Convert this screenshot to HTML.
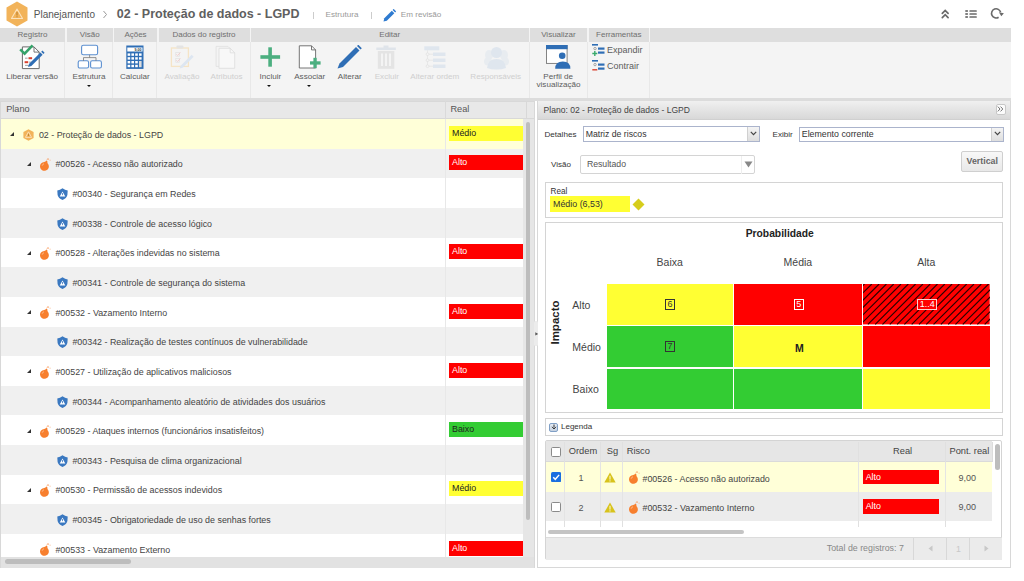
<!DOCTYPE html>
<html><head><meta charset="utf-8">
<style>
*{box-sizing:border-box;margin:0;padding:0}
html,body{width:1024px;height:581px;overflow:hidden;background:#fff;font-family:"Liberation Sans",sans-serif;color:#333}
.a{position:absolute}
.t{position:absolute;white-space:nowrap;line-height:1}
/* toolbar */
.gh{position:absolute;top:27.5px;height:14px;background:#dedede;color:#6f6f6f;font-size:8px;text-align:center;line-height:13.2px}
.gb{position:absolute;top:27.5px;height:70px;background:#f4f4f4}
.sep{position:absolute;top:41.5px;width:1px;height:56px;background:#e8e8e8}
.lbl{position:absolute;font-size:8.1px;color:#5c5c5c;white-space:nowrap;line-height:1;text-align:center}
.dis{color:#cfcfcf}
.dd{position:absolute;width:0;height:0;border-left:2.6px solid transparent;border-right:2.6px solid transparent;border-top:2.8px solid #111}
/* tree grid */
.row{position:absolute;left:1px;width:522px;height:29.65px}
.rt{position:absolute;font-size:8.9px;color:#444;white-space:nowrap;line-height:1}
.exp{position:absolute;width:0;height:0;border-left:4.5px solid transparent;border-bottom:4.5px solid #333}
.badge{position:absolute;left:449px;width:74px;height:15px;font-size:8.9px;line-height:15px;padding-left:3px}
.rb{background:#ff0000;color:#fff}
.yb{background:#ffff33;color:#222}
.gbd{background:#33cc33;color:#222}
</style></head><body>

<!-- ===== Header ===== -->
<svg class="a" style="left:5px;top:1px" width="24" height="26" viewBox="0 0 24 26">
 <path d="M12 0.5 L22.5 6.5 L22.5 19.5 L12 25.5 L1.5 19.5 L1.5 6.5 Z" fill="#f2b35a"/>
 <path d="M12 8 L17.5 17.5 L6.5 17.5 Z" fill="none" stroke="#fbe2bd" stroke-width="1.1" stroke-linejoin="round"/>
 <rect x="11.5" y="11" width="1" height="3.5" fill="#b57a2a"/><rect x="11.5" y="15.3" width="1" height="1" fill="#b57a2a"/>
</svg>
<div class="t" style="left:33.8px;top:10px;font-size:10px;color:#555">Planejamento</div>
<svg class="a" style="left:102px;top:10px" width="6" height="9"><path d="M1.5 1 L4.5 4.5 L1.5 8" fill="none" stroke="#999" stroke-width="1"/></svg>
<div class="t" style="left:116.8px;top:7.8px;font-size:12.5px;font-weight:bold;color:#606060">02 - Proteção de dados - LGPD</div>
<div class="a" style="left:313px;top:12px;width:1px;height:7px;background:#ccc"></div>
<div class="t" style="left:325.6px;top:11.2px;font-size:8.1px;color:#999">Estrutura</div>
<div class="a" style="left:371px;top:12px;width:1px;height:7px;background:#ccc"></div>
<svg class="a" style="left:383px;top:8.5px" width="13" height="13" viewBox="0 0 13 13">
 <path d="M0.5 12.5 L1.3 9.2 L8.8 1.7 L11.3 4.2 L3.8 11.7 Z" fill="#2f7bd0"/>
 <path d="M9.6 0.9 L10.6 -0.1 L13.1 2.4 L12.1 3.4 Z" fill="#2f7bd0"/>
</svg>
<div class="t" style="left:400.8px;top:11.2px;font-size:8.1px;color:#999">Em revisão</div>
<!-- top right icons -->
<svg class="a" style="left:940px;top:8px" width="10" height="12" viewBox="0 0 10 12">
 <path d="M2.3 5.3 L5.2 2.4 L8.1 5.3 M2.3 9.6 L5.2 6.7 L8.1 9.6" fill="none" stroke="#6a6a6a" stroke-width="1.7" stroke-linecap="round"/>
</svg>
<svg class="a" style="left:964px;top:8px" width="14" height="12" viewBox="0 0 14 12">
 <g fill="#6a6a6a"><rect x="1.3" y="2.15" width="2.6" height="1.7"/><rect x="5.4" y="2.15" width="7.4" height="1.7" rx="0.5"/>
 <rect x="1.3" y="5.15" width="2.6" height="1.7"/><rect x="5.4" y="5.15" width="7.4" height="1.7" rx="0.5"/>
 <rect x="1.3" y="8.15" width="2.6" height="1.7"/><rect x="5.4" y="8.15" width="7.4" height="1.7" rx="0.5"/></g>
</svg>
<svg class="a" style="left:989px;top:6px" width="16" height="15" viewBox="0 0 16 15">
 <path d="M9.6 11.28 A4.6 4.6 0 1 1 11.6 6.3" fill="none" stroke="#6a6a6a" stroke-width="1.6"/>
 <path d="M9.9 6.2 L14.9 7.3 L12.3 10.2 Z" fill="#6a6a6a"/>
</svg>

<!-- ===== Toolbar ===== -->
<div class="gb" style="left:0;width:1011px"></div>
<div class="a" style="left:0;top:97.5px;width:1011px;height:3px;background:#dcdcdc"></div>
<div class="gh" style="left:0;width:65px">Registro</div>
<div class="gh" style="left:67px;width:45.5px">Visão</div>
<div class="gh" style="left:114px;width:43px">Ações</div>
<div class="gh" style="left:158.5px;width:91px">Dados do registro</div>
<div class="gh" style="left:251px;width:277.5px">Editar</div>
<div class="gh" style="left:530.3px;width:56.3px">Visualizar</div>
<div class="gh" style="left:589px;width:59.5px">Ferramentas</div>
<div class="gh" style="left:650.4px;width:360.6px"></div>
<div class="sep" style="left:64.3px"></div>
<div class="sep" style="left:111.8px"></div>
<div class="sep" style="left:156.3px"></div>
<div class="sep" style="left:249.5px"></div>
<div class="sep" style="left:528.5px"></div>
<div class="sep" style="left:587px"></div>
<div class="sep" style="left:648.5px"></div>

<!-- Liberar versão icon -->
<svg class="a" style="left:19px;top:44px" width="27" height="27" viewBox="0 0 27 27">
 <path d="M3.4 2.9 L15 2.9 L20.2 8.1 L20.2 24.6 L3.4 24.6 Z" fill="#fff" stroke="#6a6a6a" stroke-width="1"/>
 <path d="M15 2.9 L15 8.1 L20.2 8.1" fill="none" stroke="#6a6a6a" stroke-width="0.9"/>
 <rect x="6" y="13.6" width="2.6" height="1.2" fill="#b0b0b0"/><rect x="9.5" y="13.2" width="3.6" height="2" fill="#d9412f"/>
 <rect x="5.6" y="17.2" width="3.6" height="2" fill="#d9412f"/><rect x="10" y="17.6" width="3" height="1.2" fill="#b0b0b0"/>
 <rect x="6" y="20.8" width="4" height="1.2" fill="#b0b0b0"/>
 <path d="M1.2 5.4 L5.6 9.6 L13.6 1.4" fill="none" stroke="#35a36a" stroke-width="2.6"/>
 <path d="M9 23 L10.2 19.8 L21.4 8.6 L23.6 10.8 L12.4 22 Z" fill="#2f6eb5"/>
 <path d="M22.2 7.8 L23.4 6.6 L25.6 8.8 L24.4 10 Z" fill="#2f6eb5"/>
</svg>
<div class="lbl" style="left:6.2px;top:72.5px">Liberar versão</div>

<!-- Estrutura icon -->
<svg class="a" style="left:77px;top:44px" width="26" height="25" viewBox="0 0 26 25">
 <rect x="4.6" y="1.2" width="16" height="9.6" rx="1.8" fill="#fff" stroke="#5b8fd0" stroke-width="1.1"/>
 <rect x="1.2" y="16.8" width="10.4" height="7.2" rx="1.6" fill="#fff" stroke="#5b8fd0" stroke-width="1.1"/>
 <rect x="13.6" y="16.8" width="10.8" height="7.2" rx="1.6" fill="#fff" stroke="#5b8fd0" stroke-width="1.1"/>
 <path d="M12.6 10.8 L12.6 13.6 M6.5 16.8 L6.5 13.6 L19 13.6 L19 16.8" fill="none" stroke="#777" stroke-width="0.8"/>
</svg>
<div class="lbl" style="left:72.6px;top:72.5px">Estrutura</div>
<div class="dd" style="left:86.6px;top:85px"></div>

<!-- Calcular icon -->
<svg class="a" style="left:125.5px;top:44.5px" width="18" height="25" viewBox="0 0 18 25">
 <rect x="0.3" y="0.5" width="17.2" height="23.4" fill="#2f6eb5"/>
 <rect x="1.3" y="2.5" width="15.2" height="4" fill="#fff"/>
 <text x="15.5" y="6" font-family="Liberation Sans" font-size="3.6" font-weight="bold" text-anchor="end" fill="#333">9,00</text>
 <g fill="#fff">
 <rect x="1.6" y="8.4" width="2.6" height="2.4"/><rect x="5.4" y="8.4" width="2.6" height="2.4"/><rect x="9.2" y="8.4" width="2.6" height="2.4"/><rect x="13" y="8.4" width="2.6" height="2.4"/>
 <rect x="1.6" y="12.2" width="2.6" height="2.4"/><rect x="5.4" y="12.2" width="2.6" height="2.4"/><rect x="9.2" y="12.2" width="2.6" height="2.4"/><rect x="13" y="12.2" width="2.6" height="2.4"/>
 <rect x="1.6" y="16" width="2.6" height="2.4"/><rect x="5.4" y="16" width="2.6" height="2.4"/><rect x="9.2" y="16" width="2.6" height="2.4"/><rect x="13" y="16" width="2.6" height="6.2" fill="#ddd"/>
 <rect x="1.6" y="19.8" width="2.6" height="2.4"/><rect x="5.4" y="19.8" width="2.6" height="2.4"/><rect x="9.2" y="19.8" width="2.6" height="2.4"/>
 </g>
</svg>
<div class="lbl" style="left:120px;top:72.5px">Calcular</div>

<!-- Avaliação (disabled) -->
<svg class="a" style="left:170px;top:44.5px" width="26" height="25" viewBox="0 0 26 25">
 <rect x="1.4" y="3" width="17" height="18.4" fill="none" stroke="#f5e4c6" stroke-width="1.3"/>
 <rect x="6.4" y="0.6" width="7" height="3" rx="1" fill="#e4e4e4"/>
 <rect x="5.8" y="7.6" width="3.6" height="3.6" fill="none" stroke="#dedede" stroke-width="0.6"/>
 <rect x="5.8" y="13.6" width="3.6" height="3.6" fill="none" stroke="#dedede" stroke-width="0.6"/>
 <path d="M6.3 9.2 L7.6 10.5 L10.4 7.4 M6.3 15.2 L7.6 16.5 L10.4 13.4" fill="none" stroke="#f2c2c2" stroke-width="0.7"/>
 <path d="M9.6 23.6 L10.6 20.8 L21.6 9.8 L23.6 11.8 L12.6 22.8 Z" fill="#dde6f1"/>
</svg>
<div class="lbl dis" style="left:164.5px;top:72.5px">Avaliação</div>
<!-- Atributos (disabled) -->
<svg class="a" style="left:215px;top:44.5px" width="21" height="25" viewBox="0 0 21 25">
 <path d="M1.1 1.4 L13 1.4 L15.8 4.2 L15.8 21.4 L1.1 21.4 Z" fill="#f4f4f4" stroke="#e0e0e0" stroke-width="0.8"/>
 <path d="M4 3.3 L15.2 3.3 L19.7 7.8 L19.7 23.3 L4 23.3 Z" fill="#f8f8f8" stroke="#dcdcdc" stroke-width="0.8"/>
 <path d="M15.2 3.3 L15.2 7.8 L19.7 7.8" fill="none" stroke="#dcdcdc" stroke-width="0.8"/>
</svg>
<div class="lbl dis" style="left:210.5px;top:72.5px">Atributos</div>

<!-- Incluir -->
<svg class="a" style="left:260px;top:47px" width="21" height="20" viewBox="0 0 21 20">
 <rect x="8.3" y="0.3" width="3.6" height="19.4" fill="#4caf80"/>
 <rect x="0.4" y="8.2" width="19.7" height="3.6" fill="#4caf80"/>
</svg>
<div class="lbl" style="left:259.6px;top:72.5px">Incluir</div>
<div class="dd" style="left:267.2px;top:85px"></div>
<!-- Associar -->
<svg class="a" style="left:298px;top:44.5px" width="24" height="24" viewBox="0 0 24 24">
 <path d="M1.3 0.8 L13.5 0.8 L17.6 4.9 L17.6 23 L1.3 23 Z" fill="#fff" stroke="#666" stroke-width="0.9"/>
 <path d="M13.5 0.8 L13.5 4.9 L17.6 4.9" fill="none" stroke="#666" stroke-width="0.9"/>
 <rect x="15.4" y="12.8" width="3.3" height="10.4" fill="#4caf80"/>
 <rect x="12" y="16.3" width="10.6" height="3.3" fill="#4caf80"/>
</svg>
<div class="lbl" style="left:294.2px;top:72.5px">Associar</div>
<div class="dd" style="left:306.5px;top:85px"></div>
<!-- Alterar -->
<svg class="a" style="left:337px;top:45px" width="25" height="24" viewBox="0 0 25 24">
 <path d="M0.5 23.5 L2.5 18.5 L19 2 L22.5 5.5 L6 22 Z" fill="#2f6eb5"/>
 <path d="M20 1 L21.3 -0.3 L24.8 3.2 L23.5 4.5 Z" fill="#2f6eb5"/>
</svg>
<div class="lbl" style="left:337.8px;top:72.5px">Alterar</div>
<!-- Excluir -->
<svg class="a" style="left:376px;top:45px" width="20" height="24" viewBox="0 0 20 24">
 <rect x="0.3" y="2.5" width="19.5" height="2.5" fill="#dfe4ea"/><rect x="7.5" y="0.5" width="5" height="2.5" fill="#dfe4ea"/>
 <rect x="1.8" y="6" width="16.5" height="17.8" fill="#e4e4e4"/>
 <rect x="5" y="8.5" width="2" height="12.5" fill="#f4f4f4"/><rect x="9" y="8.5" width="2" height="12.5" fill="#f4f4f4"/><rect x="13" y="8.5" width="2" height="12.5" fill="#f4f4f4"/>
</svg>
<div class="lbl dis" style="left:374.7px;top:72.5px">Excluir</div>
<!-- Alterar ordem -->
<svg class="a" style="left:423.5px;top:45.5px" width="22" height="23" viewBox="0 0 22 23">
 <rect x="0.3" y="0.3" width="15" height="4" fill="#dfe6ee"/>
 <rect x="9" y="6.5" width="12.5" height="3.5" fill="#dfe6ee"/><rect x="9" y="12.5" width="12.5" height="3.5" fill="#dfe6ee"/><rect x="9" y="18.5" width="12.5" height="3.5" fill="#dfe6ee"/>
 <path d="M3.5 4.3 L3.5 20 M3.5 8.2 L9 8.2 M3.5 14.2 L9 14.2 M3.5 20.2 L9 20.2" stroke="#e2e2e2" stroke-width="0.7"/>
 <circle cx="3.5" cy="8.2" r="1.4" fill="#f4f4f4" stroke="#ddd" stroke-width="0.6"/><circle cx="3.5" cy="14.2" r="1.4" fill="#f4f4f4" stroke="#ddd" stroke-width="0.6"/><circle cx="3.5" cy="20.2" r="1.4" fill="#f4f4f4" stroke="#ddd" stroke-width="0.6"/>
</svg>
<div class="lbl dis" style="left:410.3px;top:72.5px">Alterar ordem</div>
<!-- Responsáveis -->
<svg class="a" style="left:484px;top:45.5px" width="25" height="24" viewBox="0 0 25 24">
 <ellipse cx="5" cy="9" rx="4" ry="5" fill="#e8ecf0"/><ellipse cx="20" cy="9" rx="4" ry="5" fill="#e8ecf0"/>
 <ellipse cx="4" cy="15.5" rx="4" ry="4" fill="#e8ecf0"/><ellipse cx="21" cy="15.5" rx="4" ry="4" fill="#e8ecf0"/>
 <circle cx="12.5" cy="6.5" r="5.5" fill="#dfe6ee"/>
 <path d="M3 22 Q4 13 12.5 13 Q21 13 22 22 Q18 23.5 12.5 23.5 Q7 23.5 3 22 Z" fill="#dfe6ee"/>
</svg>
<div class="lbl dis" style="left:470.3px;top:72.5px">Responsáveis</div>
<!-- Perfil de visualização -->
<svg class="a" style="left:546px;top:45px" width="25" height="24" viewBox="0 0 25 24">
 <rect x="0.5" y="0.5" width="20.6" height="17.9" fill="#fff" stroke="#777" stroke-width="0.9"/>
 <rect x="0" y="0" width="21.6" height="4.2" fill="#2f6eb5"/>
 <circle cx="16.2" cy="10.8" r="3.3" fill="#2f6eb5"/>
 <path d="M9.2 23.8 Q9.2 16.6 16.8 16.6 Q24.4 16.6 24.4 23.8 Z" fill="#2f6eb5"/>
</svg>
<div class="lbl" style="left:543.3px;top:73.2px">Perfil de</div>
<div class="lbl" style="left:536.5px;top:81.4px">visualização</div>
<!-- Expandir / Contrair -->
<svg class="a" style="left:592px;top:44px" width="13" height="12" viewBox="0 0 13 12">
 <rect x="0" y="0" width="6" height="1.6" fill="#2f6eb5"/>
 <rect x="6" y="3.5" width="6.5" height="2.2" fill="#2f6eb5"/><rect x="6" y="7.5" width="6.5" height="2.2" fill="#2f6eb5"/>
 <circle cx="3" cy="4.6" r="1.2" fill="none" stroke="#777" stroke-width="0.6"/>
 <path d="M0.3 9.5 L5.3 9.5 M2.8 7 L2.8 12" stroke="#3aaa6c" stroke-width="1.4"/>
</svg>
<div class="t" style="left:607px;top:46px;font-size:9px;color:#5c5c5c">Expandir</div>
<svg class="a" style="left:592px;top:60px" width="13" height="12" viewBox="0 0 13 12">
 <rect x="0" y="0" width="6" height="1.6" fill="#2f6eb5"/>
 <rect x="6" y="3.5" width="6.5" height="2.2" fill="#2f6eb5"/><rect x="6" y="7.5" width="6.5" height="2.2" fill="#2f6eb5"/>
 <circle cx="3" cy="4.6" r="1.2" fill="none" stroke="#777" stroke-width="0.6"/>
 <path d="M0.3 9.8 L5.3 9.8" stroke="#d9412f" stroke-width="1.4"/>
</svg>
<div class="t" style="left:607px;top:62px;font-size:9px;color:#5c5c5c">Contrair</div>

<!-- ===== Left grid ===== -->
<div class="a" style="left:0;top:100.5px;width:534.5px;height:467.5px;background:#fff;border:1px solid #d8d8d8"></div>
<div class="a" style="left:1px;top:101.5px;width:532.5px;height:17.5px;background:#e8e8e8;border-bottom:1px solid #d8d8d8"></div>
<div class="t" style="left:6.2px;top:105.3px;font-size:9.2px;color:#555">Plano</div>
<div class="a" style="left:445px;top:101px;width:1px;height:18px;background:#dadada"></div>
<div class="a" style="left:526px;top:101px;width:1px;height:17.5px;background:#d8d8d8"></div>
<div class="t" style="left:450.4px;top:105.3px;font-size:9.2px;color:#555">Real</div>
<div class="row" style="top:119.00px;background:#ffffd8"></div>
<div class="exp" style="left:9.9px;top:132.2px"></div>
<svg class="a" style="left:22.7px;top:129.0px" width="11" height="12" viewBox="0 0 11 12"><path d="M5.5 0.2 L10.6 3.1 L10.6 8.9 L5.5 11.8 L0.4 8.9 L0.4 3.1 Z" fill="#f2b35a"/><path d="M5.5 2.8 L8.6 8.4 L2.4 8.4 Z" fill="none" stroke="#fbe6c6" stroke-width="0.8" stroke-linejoin="round"/><rect x="5.1" y="4.8" width="0.8" height="2.2" fill="#b07a30"/></svg>
<div class="rt" style="left:38.9px;top:130.6px">02 - Proteção de dados - LGPD</div>
<div class="badge yb" style="top:125.6px">Médio</div>
<div class="row" style="top:148.65px;background:#f0f0f0"></div>
<div class="exp" style="left:27.0px;top:161.9px"></div>
<svg class="a" style="left:39.2px;top:158.0px" width="12" height="13" viewBox="0 0 12 13"><path d="M5.3 4 Q7.2 3.2 7.6 2.4 L8.4 3.2 Q8 4.8 9.4 6.5 A4.4 4.4 0 1 1 5.3 4 Z" fill="#f77f2e"/><path d="M9 0.3 L9 2 M8.1 1.1 L9.9 1.1 M10.6 2.2 L11.6 2.2 M7.2 1.6 L7.6 1.9" stroke="#f9a46a" stroke-width="0.7"/><path d="M3.2 7.6 Q3.6 6.2 4.8 5.8" fill="none" stroke="#fcc9a3" stroke-width="0.9"/></svg>
<div class="rt" style="left:55.4px;top:160.3px">#00526 - Acesso não autorizado</div>
<div class="badge rb" style="top:155.3px">Alto</div>
<div class="row" style="top:178.30px;background:#fff"></div>
<svg class="a" style="left:56.9px;top:188.1px" width="11" height="12" viewBox="0 0 11 12"><path d="M5.5 0.2 Q8 2 10.7 2.4 L10.4 7 Q9.6 10.4 5.5 12 Q1.4 10.4 0.6 7 L0.3 2.4 Q3 2 5.5 0.2 Z" fill="#3a78c0"/><path d="M5.5 3.4 L8.3 8.6 L2.7 8.6 Z" fill="#fff"/><rect x="5.1" y="5" width="0.8" height="2.2" fill="#3a78c0"/></svg>
<div class="rt" style="left:72.4px;top:189.9px">#00340 - Segurança em Redes</div>
<div class="row" style="top:207.95px;background:#f0f0f0"></div>
<svg class="a" style="left:56.9px;top:217.8px" width="11" height="12" viewBox="0 0 11 12"><path d="M5.5 0.2 Q8 2 10.7 2.4 L10.4 7 Q9.6 10.4 5.5 12 Q1.4 10.4 0.6 7 L0.3 2.4 Q3 2 5.5 0.2 Z" fill="#3a78c0"/><path d="M5.5 3.4 L8.3 8.6 L2.7 8.6 Z" fill="#fff"/><rect x="5.1" y="5" width="0.8" height="2.2" fill="#3a78c0"/></svg>
<div class="rt" style="left:72.4px;top:219.6px">#00338 - Controle de acesso lógico</div>
<div class="row" style="top:237.60px;background:#fff"></div>
<div class="exp" style="left:27.0px;top:250.8px"></div>
<svg class="a" style="left:39.2px;top:246.9px" width="12" height="13" viewBox="0 0 12 13"><path d="M5.3 4 Q7.2 3.2 7.6 2.4 L8.4 3.2 Q8 4.8 9.4 6.5 A4.4 4.4 0 1 1 5.3 4 Z" fill="#f77f2e"/><path d="M9 0.3 L9 2 M8.1 1.1 L9.9 1.1 M10.6 2.2 L11.6 2.2 M7.2 1.6 L7.6 1.9" stroke="#f9a46a" stroke-width="0.7"/><path d="M3.2 7.6 Q3.6 6.2 4.8 5.8" fill="none" stroke="#fcc9a3" stroke-width="0.9"/></svg>
<div class="rt" style="left:55.4px;top:249.2px">#00528 - Alterações indevidas no sistema</div>
<div class="badge rb" style="top:244.2px">Alto</div>
<div class="row" style="top:267.25px;background:#f0f0f0"></div>
<svg class="a" style="left:56.9px;top:277.1px" width="11" height="12" viewBox="0 0 11 12"><path d="M5.5 0.2 Q8 2 10.7 2.4 L10.4 7 Q9.6 10.4 5.5 12 Q1.4 10.4 0.6 7 L0.3 2.4 Q3 2 5.5 0.2 Z" fill="#3a78c0"/><path d="M5.5 3.4 L8.3 8.6 L2.7 8.6 Z" fill="#fff"/><rect x="5.1" y="5" width="0.8" height="2.2" fill="#3a78c0"/></svg>
<div class="rt" style="left:72.4px;top:278.9px">#00341 - Controle de segurança do sistema</div>
<div class="row" style="top:296.90px;background:#fff"></div>
<div class="exp" style="left:27.0px;top:310.1px"></div>
<svg class="a" style="left:39.2px;top:306.2px" width="12" height="13" viewBox="0 0 12 13"><path d="M5.3 4 Q7.2 3.2 7.6 2.4 L8.4 3.2 Q8 4.8 9.4 6.5 A4.4 4.4 0 1 1 5.3 4 Z" fill="#f77f2e"/><path d="M9 0.3 L9 2 M8.1 1.1 L9.9 1.1 M10.6 2.2 L11.6 2.2 M7.2 1.6 L7.6 1.9" stroke="#f9a46a" stroke-width="0.7"/><path d="M3.2 7.6 Q3.6 6.2 4.8 5.8" fill="none" stroke="#fcc9a3" stroke-width="0.9"/></svg>
<div class="rt" style="left:55.4px;top:308.5px">#00532 - Vazamento Interno</div>
<div class="badge rb" style="top:303.5px">Alto</div>
<div class="row" style="top:326.55px;background:#f0f0f0"></div>
<svg class="a" style="left:56.9px;top:336.4px" width="11" height="12" viewBox="0 0 11 12"><path d="M5.5 0.2 Q8 2 10.7 2.4 L10.4 7 Q9.6 10.4 5.5 12 Q1.4 10.4 0.6 7 L0.3 2.4 Q3 2 5.5 0.2 Z" fill="#3a78c0"/><path d="M5.5 3.4 L8.3 8.6 L2.7 8.6 Z" fill="#fff"/><rect x="5.1" y="5" width="0.8" height="2.2" fill="#3a78c0"/></svg>
<div class="rt" style="left:72.4px;top:338.2px">#00342 - Realização de testes contínuos de vulnerabilidade</div>
<div class="row" style="top:356.20px;background:#fff"></div>
<div class="exp" style="left:27.0px;top:369.4px"></div>
<svg class="a" style="left:39.2px;top:365.5px" width="12" height="13" viewBox="0 0 12 13"><path d="M5.3 4 Q7.2 3.2 7.6 2.4 L8.4 3.2 Q8 4.8 9.4 6.5 A4.4 4.4 0 1 1 5.3 4 Z" fill="#f77f2e"/><path d="M9 0.3 L9 2 M8.1 1.1 L9.9 1.1 M10.6 2.2 L11.6 2.2 M7.2 1.6 L7.6 1.9" stroke="#f9a46a" stroke-width="0.7"/><path d="M3.2 7.6 Q3.6 6.2 4.8 5.8" fill="none" stroke="#fcc9a3" stroke-width="0.9"/></svg>
<div class="rt" style="left:55.4px;top:367.8px">#00527 - Utilização de aplicativos maliciosos</div>
<div class="badge rb" style="top:362.8px">Alto</div>
<div class="row" style="top:385.85px;background:#f0f0f0"></div>
<svg class="a" style="left:56.9px;top:395.7px" width="11" height="12" viewBox="0 0 11 12"><path d="M5.5 0.2 Q8 2 10.7 2.4 L10.4 7 Q9.6 10.4 5.5 12 Q1.4 10.4 0.6 7 L0.3 2.4 Q3 2 5.5 0.2 Z" fill="#3a78c0"/><path d="M5.5 3.4 L8.3 8.6 L2.7 8.6 Z" fill="#fff"/><rect x="5.1" y="5" width="0.8" height="2.2" fill="#3a78c0"/></svg>
<div class="rt" style="left:72.4px;top:397.5px">#00344 - Acompanhamento aleatório de atividades dos usuários</div>
<div class="row" style="top:415.50px;background:#fff"></div>
<div class="exp" style="left:27.0px;top:428.7px"></div>
<svg class="a" style="left:39.2px;top:424.8px" width="12" height="13" viewBox="0 0 12 13"><path d="M5.3 4 Q7.2 3.2 7.6 2.4 L8.4 3.2 Q8 4.8 9.4 6.5 A4.4 4.4 0 1 1 5.3 4 Z" fill="#f77f2e"/><path d="M9 0.3 L9 2 M8.1 1.1 L9.9 1.1 M10.6 2.2 L11.6 2.2 M7.2 1.6 L7.6 1.9" stroke="#f9a46a" stroke-width="0.7"/><path d="M3.2 7.6 Q3.6 6.2 4.8 5.8" fill="none" stroke="#fcc9a3" stroke-width="0.9"/></svg>
<div class="rt" style="left:55.4px;top:427.1px">#00529 - Ataques internos (funcionários insatisfeitos)</div>
<div class="badge gbd" style="top:422.1px">Baixo</div>
<div class="row" style="top:445.15px;background:#f0f0f0"></div>
<svg class="a" style="left:56.9px;top:455.0px" width="11" height="12" viewBox="0 0 11 12"><path d="M5.5 0.2 Q8 2 10.7 2.4 L10.4 7 Q9.6 10.4 5.5 12 Q1.4 10.4 0.6 7 L0.3 2.4 Q3 2 5.5 0.2 Z" fill="#3a78c0"/><path d="M5.5 3.4 L8.3 8.6 L2.7 8.6 Z" fill="#fff"/><rect x="5.1" y="5" width="0.8" height="2.2" fill="#3a78c0"/></svg>
<div class="rt" style="left:72.4px;top:456.8px">#00343 - Pesquisa de clima organizacional</div>
<div class="row" style="top:474.80px;background:#fff"></div>
<div class="exp" style="left:27.0px;top:488.0px"></div>
<svg class="a" style="left:39.2px;top:484.1px" width="12" height="13" viewBox="0 0 12 13"><path d="M5.3 4 Q7.2 3.2 7.6 2.4 L8.4 3.2 Q8 4.8 9.4 6.5 A4.4 4.4 0 1 1 5.3 4 Z" fill="#f77f2e"/><path d="M9 0.3 L9 2 M8.1 1.1 L9.9 1.1 M10.6 2.2 L11.6 2.2 M7.2 1.6 L7.6 1.9" stroke="#f9a46a" stroke-width="0.7"/><path d="M3.2 7.6 Q3.6 6.2 4.8 5.8" fill="none" stroke="#fcc9a3" stroke-width="0.9"/></svg>
<div class="rt" style="left:55.4px;top:486.4px">#00530 - Permissão de acessos indevidos</div>
<div class="badge yb" style="top:481.4px">Médio</div>
<div class="row" style="top:504.45px;background:#f0f0f0"></div>
<svg class="a" style="left:56.9px;top:514.3px" width="11" height="12" viewBox="0 0 11 12"><path d="M5.5 0.2 Q8 2 10.7 2.4 L10.4 7 Q9.6 10.4 5.5 12 Q1.4 10.4 0.6 7 L0.3 2.4 Q3 2 5.5 0.2 Z" fill="#3a78c0"/><path d="M5.5 3.4 L8.3 8.6 L2.7 8.6 Z" fill="#fff"/><rect x="5.1" y="5" width="0.8" height="2.2" fill="#3a78c0"/></svg>
<div class="rt" style="left:72.4px;top:516.1px">#00345 - Obrigatoriedade de uso de senhas fortes</div>
<div class="row" style="top:534.10px;background:#fff"></div>
<svg class="a" style="left:39.2px;top:543.4px" width="12" height="13" viewBox="0 0 12 13"><path d="M5.3 4 Q7.2 3.2 7.6 2.4 L8.4 3.2 Q8 4.8 9.4 6.5 A4.4 4.4 0 1 1 5.3 4 Z" fill="#f77f2e"/><path d="M9 0.3 L9 2 M8.1 1.1 L9.9 1.1 M10.6 2.2 L11.6 2.2 M7.2 1.6 L7.6 1.9" stroke="#f9a46a" stroke-width="0.7"/><path d="M3.2 7.6 Q3.6 6.2 4.8 5.8" fill="none" stroke="#fcc9a3" stroke-width="0.9"/></svg>
<div class="rt" style="left:55.4px;top:545.7px">#00533 - Vazamento Externo</div>
<div class="badge rb" style="top:540.7px">Alto</div>
<div class="a" style="left:445px;top:119px;width:1px;height:438px;background:#e8e8e8"></div>
<!-- vertical scrollbar -->
<div class="a" style="left:523px;top:119px;width:10.5px;height:438px;background:#e6e6e6"></div>
<div class="a" style="left:525.5px;top:122px;width:4.8px;height:398px;background:#bdbdbd;border-radius:3px"></div>
<!-- horizontal scrollbar -->
<div class="a" style="left:1px;top:557px;width:532.5px;height:10.5px;background:#e2e2e2"></div>
<div class="a" style="left:4.7px;top:558.8px;width:126px;height:5.3px;background:#bdbdbd;border-radius:3px"></div>

<!-- ===== Right panel ===== -->
<div class="a" style="left:537px;top:100.5px;width:474px;height:467.5px;background:#fff;border:1px solid #d8d8d8"></div>
<div class="a" style="left:538px;top:101.3px;width:472px;height:18.5px;background:linear-gradient(#f0f0f0,#d8d8d8);border-bottom:1px solid #d0d0d0"></div>
<div class="t" style="left:543.6px;top:105.9px;font-size:8.55px;color:#444">Plano: 02 - Proteção de dados - LGPD</div>
<div class="a" style="left:995.5px;top:104px;width:10px;height:10.5px;background:#fbfbfb;border:1px solid #c8c8c8;border-radius:2px"></div>
<svg class="a" style="left:997.3px;top:106.2px" width="7" height="6" viewBox="0 0 7 6"><path d="M0.8 0.6 L3 3 L0.8 5.4 M3.6 0.6 L5.8 3 L3.6 5.4" fill="none" stroke="#666" stroke-width="0.9"/></svg>

<div class="t" style="left:544.5px;top:130.7px;font-size:8.1px;color:#333">Detalhes</div>
<div class="a" style="left:582.7px;top:126.3px;width:177.5px;height:15.5px;background:#fff;border:1px solid #abb4cc"></div>
<div class="a" style="left:747.2px;top:127.3px;width:12px;height:13.5px;background:linear-gradient(#f4f4f4,#dedede);border-left:1px solid #d0d0d0"></div>
<svg class="a" style="left:750px;top:131px" width="7" height="5" viewBox="0 0 7 5"><path d="M0.8 0.8 L3.5 3.6 L6.2 0.8" fill="none" stroke="#444" stroke-width="1.2"/></svg>
<div class="t" style="left:585.7px;top:129.5px;font-size:8.7px;color:#333">Matriz de riscos</div>

<div class="t" style="left:772.5px;top:130.7px;font-size:8.1px;color:#333">Exibir</div>
<div class="a" style="left:799.2px;top:126.5px;width:204.5px;height:15.5px;background:#fff;border:1px solid #abb4cc"></div>
<div class="a" style="left:990.7px;top:127.5px;width:12px;height:13.5px;background:linear-gradient(#f4f4f4,#dedede);border-left:1px solid #d0d0d0"></div>
<svg class="a" style="left:993.5px;top:131px" width="7" height="5" viewBox="0 0 7 5"><path d="M0.8 0.8 L3.5 3.6 L6.2 0.8" fill="none" stroke="#444" stroke-width="1.2"/></svg>
<div class="t" style="left:801.8px;top:129.8px;font-size:8.8px;color:#333">Elemento corrente</div>

<div class="t" style="left:551px;top:160.7px;font-size:8px;color:#333">Visão</div>
<div class="a" style="left:580px;top:154.7px;width:175px;height:19.7px;background:#fff;border:1px solid #d4d4d4;border-radius:2px"></div>
<div class="a" style="left:741px;top:155.5px;width:1px;height:18px;background:#eee"></div>
<svg class="a" style="left:743.5px;top:161px" width="9" height="7" viewBox="0 0 9 7"><path d="M0.5 0.5 L8.5 0.5 L4.5 6.5 Z" fill="#888"/></svg>
<div class="t" style="left:586.9px;top:159.8px;font-size:8.7px;color:#555">Resultado</div>

<div class="a" style="left:961px;top:151.4px;width:41.8px;height:20.5px;background:linear-gradient(#f8f8f8,#e8e8e8);border:1px solid #cfcfcf;border-radius:2px"></div>
<div class="t" style="left:966.6px;top:157.3px;font-size:8.8px;font-weight:bold;color:#666">Vertical</div>

<div class="a" style="left:545.2px;top:182.1px;width:457.8px;height:36px;border:1px solid #d4d4d4"></div>
<div class="t" style="left:550.6px;top:187.5px;font-size:8.2px;color:#333">Real</div>
<div class="a" style="left:549.9px;top:196.2px;width:80.1px;height:15.7px;background:#ffff33"></div>
<div class="t" style="left:553px;top:199.5px;font-size:8.9px;color:#333">Médio (6,53)</div>
<svg class="a" style="left:632px;top:197.5px" width="13" height="13" viewBox="0 0 13 13"><path d="M6.5 0.5 L12.5 6.5 L6.5 12.5 L0.5 6.5 Z" fill="#d6cd1c"/></svg>

<!-- Matrix -->
<div class="a" style="left:545.3px;top:222.2px;width:457.3px;height:191px;border:1px solid #d4d4d4"></div>
<div class="t" style="left:745.7px;top:228.5px;font-size:10.3px;font-weight:bold;color:#222">Probabilidade</div>
<div class="t" style="left:656.6px;top:257px;font-size:10.5px;color:#444">Baixa</div>
<div class="t" style="left:783.6px;top:257px;font-size:10.5px;color:#444">Média</div>
<div class="t" style="left:917.2px;top:257px;font-size:10.5px;color:#444">Alta</div>
<div class="t" style="left:572.3px;top:299.5px;font-size:10.5px;color:#444">Alto</div>
<div class="t" style="left:572.3px;top:341.5px;font-size:10.5px;color:#444">Médio</div>
<div class="t" style="left:572.6px;top:384px;font-size:10.5px;color:#444">Baixo</div>
<div class="t" style="left:530.3px;top:316.6px;font-size:11.5px;font-weight:bold;color:#222;transform:rotate(-90deg);transform-origin:25px 5.5px;width:50px;height:11px;text-align:center">Impacto</div>

<div class="a" style="left:607px;top:284.2px;width:126.2px;height:40.4px;background:#ffff33"></div>
<div class="a" style="left:734.4px;top:284.2px;width:127.5px;height:40.4px;background:#ff0000"></div>
<svg class="a" style="left:863.3px;top:284.2px" width="126.7" height="40.4" viewBox="0 0 126.7 40.4"><rect width="126.7" height="40.4" fill="#ff0000"/><path d="M-38.90 40.4 L1.50 0 M-31.60 40.4 L8.80 0 M-24.30 40.4 L16.10 0 M-17.00 40.4 L23.40 0 M-9.70 40.4 L30.70 0 M-2.40 40.4 L38.00 0 M4.90 40.4 L45.30 0 M12.20 40.4 L52.60 0 M19.50 40.4 L59.90 0 M26.80 40.4 L67.20 0 M34.10 40.4 L74.50 0 M41.40 40.4 L81.80 0 M48.70 40.4 L89.10 0 M56.00 40.4 L96.40 0 M63.30 40.4 L103.70 0 M70.60 40.4 L111.00 0 M77.90 40.4 L118.30 0 M85.20 40.4 L125.60 0 M92.50 40.4 L132.90 0 M99.80 40.4 L140.20 0 M107.10 40.4 L147.50 0 M114.40 40.4 L154.80 0 M121.70 40.4 L162.10 0" stroke="#2a0000" stroke-width="1.15" fill="none"/></svg>
<div class="a" style="left:607px;top:326px;width:126.2px;height:40.9px;background:#33cc33"></div>
<div class="a" style="left:734.4px;top:326px;width:127.5px;height:40.9px;background:#ffff33"></div>
<div class="a" style="left:863.3px;top:326px;width:126.7px;height:40.9px;background:#ff0000"></div>
<div class="a" style="left:607px;top:368.6px;width:126.2px;height:40px;background:#33cc33"></div>
<div class="a" style="left:734.4px;top:368.6px;width:127.5px;height:40px;background:#33cc33"></div>
<div class="a" style="left:863.3px;top:368.6px;width:126.7px;height:40px;background:#ffff33"></div>

<div class="a" style="left:665px;top:299px;width:10px;height:10.5px;border:1px solid #333;font-size:9px;line-height:8.5px;text-align:center;color:#333">6</div>
<div class="a" style="left:793.8px;top:299px;width:10px;height:10.5px;border:1px solid #fff;font-size:9px;line-height:8.5px;text-align:center;color:#fff">5</div>
<div class="a" style="left:917.2px;top:299px;width:20px;height:10.5px;border:1px solid #ffd0d0;background:#ff0000;font-size:9px;line-height:8.5px;text-align:center;color:#fff">1..4</div>
<div class="a" style="left:665px;top:341px;width:10px;height:10.5px;border:1px solid #333;font-size:9px;line-height:8.5px;text-align:center;color:#333">7</div>
<div class="t" style="left:795px;top:342.8px;font-size:10.5px;font-weight:bold;color:#222">M</div>

<!-- Legenda -->
<div class="a" style="left:545.3px;top:418px;width:457.3px;height:17.5px;border:1px solid #d4d4d4"></div>
<div class="a" style="left:548.7px;top:422.5px;width:9px;height:9px;border:1px solid #7f9fc6;border-radius:2px;background:linear-gradient(#e6ecf4,#c4d0df)"></div>
<svg class="a" style="left:550.5px;top:424px" width="6" height="6" viewBox="0 0 6 6"><path d="M3 0.5 L3 3.5 M1 2.8 L3 5 L5 2.8" fill="none" stroke="#333" stroke-width="1"/></svg>
<div class="t" style="left:561px;top:422.5px;font-size:8px;color:#333">Legenda</div>

<!-- Bottom grid -->
<div class="a" style="left:545.3px;top:440px;width:457.2px;height:120.3px;border:1px solid #d4d4d4;background:#fff;border-radius:2px"></div>
<div class="a" style="left:546.3px;top:441px;width:446px;height:21px;background:#e6e6e6;border-bottom:1px solid #dadada"></div>
<div class="a" style="left:564.1px;top:441.5px;width:1px;height:85px;background:#e0e0e0"></div>
<div class="a" style="left:600.3px;top:441.5px;width:1px;height:85px;background:#e0e0e0"></div>
<div class="a" style="left:622.4px;top:441.5px;width:1px;height:85px;background:#e0e0e0"></div>
<div class="a" style="left:858.3px;top:441.5px;width:1px;height:85px;background:#e0e0e0"></div>
<div class="a" style="left:945.1px;top:441.5px;width:1px;height:85px;background:#e0e0e0"></div>
<div class="a" style="left:992.2px;top:441.5px;width:1px;height:20.5px;background:#dcdcdc"></div>
<div class="a" style="left:550.8px;top:447px;width:10.2px;height:10.2px;border:1px solid #8a8a8a;border-radius:1.6px;background:#fff"></div>
<div class="t" style="left:568.8px;top:447px;font-size:9.3px;color:#444">Ordem</div>
<div class="t" style="left:606.8px;top:447px;font-size:9.3px;color:#444">Sg</div>
<div class="t" style="left:626.7px;top:447px;font-size:9.3px;color:#444">Risco</div>
<div class="t" style="left:893px;top:447px;font-size:9.3px;color:#444">Real</div>
<div class="t" style="left:949.5px;top:447px;font-size:9.3px;color:#444">Pont. real</div>
<div class="a" style="left:546.3px;top:462.0px;width:446px;height:29.7px;background:#ffffd8"></div>
<div class="a" style="left:564.1px;top:462.0px;width:1px;height:29.7px;background:#e4e4e4"></div>
<div class="a" style="left:600.3px;top:462.0px;width:1px;height:29.7px;background:#e4e4e4"></div>
<div class="a" style="left:622.4px;top:462.0px;width:1px;height:29.7px;background:#e4e4e4"></div>
<div class="a" style="left:858.3px;top:462.0px;width:1px;height:29.7px;background:#e4e4e4"></div>
<div class="a" style="left:945.1px;top:462.0px;width:1px;height:29.7px;background:#e4e4e4"></div>
<svg class="a" style="left:550.8px;top:472.2px" width="10.2" height="10.2" viewBox="0 0 10 10"><rect x="0" y="0" width="10" height="10" rx="1.6" fill="#1a6fe0"/><path d="M2.2 5.2 L4.2 7.2 L8 2.8" fill="none" stroke="#fff" stroke-width="1.4"/></svg>
<div class="t" style="left:578.5px;top:473.8px;font-size:9px;color:#555">1</div>
<svg class="a" style="left:604.3px;top:472.0px" width="12" height="11" viewBox="0 0 12 11"><path d="M6 0.5 L11.7 10.5 L0.3 10.5 Z" fill="#d8c31c"/><rect x="5.35" y="3.8" width="1.3" height="3.8" fill="#f4eeb8"/><rect x="5.35" y="8.3" width="1.3" height="1.2" fill="#f4eeb8"/></svg>
<svg class="a" style="left:628.3px;top:471.0px" width="12" height="13" viewBox="0 0 12 13"><path d="M5.3 4 Q7.2 3.2 7.6 2.4 L8.4 3.2 Q8 4.8 9.4 6.5 A4.4 4.4 0 1 1 5.3 4 Z" fill="#f77f2e"/><path d="M9 0.3 L9 2 M8.1 1.1 L9.9 1.1 M10.6 2.2 L11.6 2.2 M7.2 1.6 L7.6 1.9" stroke="#f9a46a" stroke-width="0.7"/><path d="M3.2 7.6 Q3.6 6.2 4.8 5.8" fill="none" stroke="#fcc9a3" stroke-width="0.9"/></svg>
<div class="t" style="left:642.5px;top:474.7px;font-size:8.9px;color:#444">#00526 - Acesso não autorizado</div>
<div class="badge rb" style="left:862.7px;width:76px;top:469.7px;height:14.8px;line-height:14.8px">Alto</div>
<div class="t" style="left:958.5px;top:473.6px;font-size:9px;color:#555">9,00</div>
<div class="a" style="left:546.3px;top:491.7px;width:446px;height:29.7px;background:#ececec"></div>
<div class="a" style="left:564.1px;top:491.7px;width:1px;height:29.7px;background:#e4e4e4"></div>
<div class="a" style="left:600.3px;top:491.7px;width:1px;height:29.7px;background:#e4e4e4"></div>
<div class="a" style="left:622.4px;top:491.7px;width:1px;height:29.7px;background:#e4e4e4"></div>
<div class="a" style="left:858.3px;top:491.7px;width:1px;height:29.7px;background:#e4e4e4"></div>
<div class="a" style="left:945.1px;top:491.7px;width:1px;height:29.7px;background:#e4e4e4"></div>
<div class="a" style="left:550.8px;top:501.9px;width:10.2px;height:10.2px;border:1px solid #8a8a8a;border-radius:1.6px;background:#fff"></div>
<div class="t" style="left:578.5px;top:503.5px;font-size:9px;color:#555">2</div>
<svg class="a" style="left:604.3px;top:501.7px" width="12" height="11" viewBox="0 0 12 11"><path d="M6 0.5 L11.7 10.5 L0.3 10.5 Z" fill="#d8c31c"/><rect x="5.35" y="3.8" width="1.3" height="3.8" fill="#f4eeb8"/><rect x="5.35" y="8.3" width="1.3" height="1.2" fill="#f4eeb8"/></svg>
<svg class="a" style="left:628.3px;top:500.7px" width="12" height="13" viewBox="0 0 12 13"><path d="M5.3 4 Q7.2 3.2 7.6 2.4 L8.4 3.2 Q8 4.8 9.4 6.5 A4.4 4.4 0 1 1 5.3 4 Z" fill="#f77f2e"/><path d="M9 0.3 L9 2 M8.1 1.1 L9.9 1.1 M10.6 2.2 L11.6 2.2 M7.2 1.6 L7.6 1.9" stroke="#f9a46a" stroke-width="0.7"/><path d="M3.2 7.6 Q3.6 6.2 4.8 5.8" fill="none" stroke="#fcc9a3" stroke-width="0.9"/></svg>
<div class="t" style="left:642.5px;top:504.4px;font-size:8.9px;color:#444">#00532 - Vazamento Interno</div>
<div class="badge rb" style="left:862.7px;width:76px;top:499.4px;height:14.8px;line-height:14.8px">Alto</div>
<div class="t" style="left:958.5px;top:503.3px;font-size:9px;color:#555">9,00</div>
<div class="a" style="left:995px;top:443.8px;width:4.5px;height:26.5px;background:#bdbdbd;border-radius:2.5px"></div>
<div class="a" style="left:548.3px;top:530px;width:196px;height:4px;background:#c4c4c4;border-radius:2px"></div>
<div class="a" style="left:546.3px;top:536.8px;width:456px;height:23.2px;background:#ebebeb;border-top:1px solid #dcdcdc"></div>
<div class="t" style="left:826.8px;top:544px;font-size:8.83px;color:#888">Total de registros: 7</div>
<div class="a" style="left:912.8px;top:537.5px;width:1px;height:22px;background:#d8d8d8"></div>
<div class="a" style="left:945.8px;top:537.5px;width:1px;height:22px;background:#d8d8d8"></div>
<div class="a" style="left:969px;top:537.5px;width:1px;height:22px;background:#d8d8d8"></div>
<svg class="a" style="left:927.5px;top:545px" width="5" height="7"><path d="M4.5 0.5 L0.5 3.5 L4.5 6.5 Z" fill="#c8c8c8"/></svg>
<div class="t" style="left:956px;top:545px;font-size:8.8px;color:#c8c8c8">1</div>
<svg class="a" style="left:984px;top:545px" width="5" height="7"><path d="M0.5 0.5 L4.5 3.5 L0.5 6.5 Z" fill="#c8c8c8"/></svg>

<!-- splitter handle -->
<div class="a" style="left:534px;top:321px;width:3.5px;height:24.5px;background:#ececec;border-radius:1.5px"></div>
<svg class="a" style="left:534.6px;top:331.5px" width="4" height="4" viewBox="0 0 4 4"><path d="M0.3 0.2 L3.2 1.9 L0.3 3.6 Z" fill="#555"/></svg>

</body></html>
